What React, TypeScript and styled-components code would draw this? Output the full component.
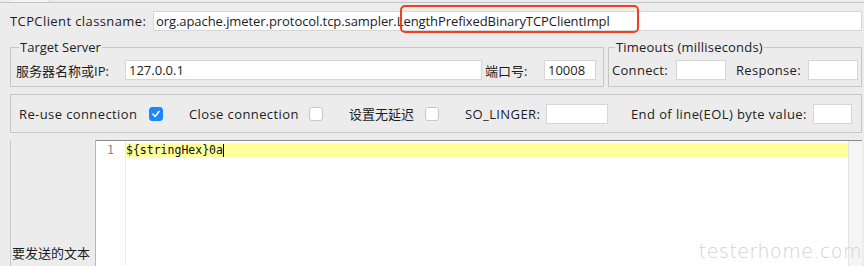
import React from "react";
import styled, { createGlobalStyle } from "styled-components";

const Global = createGlobalStyle`
  html, body { margin: 0; padding: 0; background: #ececec; overflow: hidden; }
  body { width: 864px; height: 266px; font-family: "Open Sans", "Noto Sans CJK SC", sans-serif; font-size: 13px; color: #1d1d1d; }
  * { box-sizing: border-box; }
`;

const Page = styled.div`
  width: 864px;
  height: 266px;
  display: flex;
  flex-direction: column;
  position: relative;
`;

const TopStrip = styled.div`
  height: 3px;
  border-bottom: 1px solid #c4c4c4;
  display: flex;
  padding-left: 10px;
`;

const TopTab = styled.div`
  width: 40px;
  height: 2px;
  background: #f4f4f4;
  border-right: 1px solid #cfcfcf;
`;

const ClassRow = styled.div`
  margin-top: 8px;
  height: 20px;
  display: flex;
  align-items: center;
  padding: 0 2px 0 10px;
`;

const Label = styled.span<{ $w?: number; $ml?: number; $ls?: number }>`
  white-space: nowrap;
  letter-spacing: ${(p) => p.$ls ?? 0}px;
  ${(p) => (p.$w ? `width: ${p.$w}px; flex: none;` : "")}
  ${(p) => (p.$ml ? `margin-left: ${p.$ml}px;` : "")}
`;

const Input = styled.div<{ $w?: number; $ml?: number }>`
  height: 20px;
  background: #fff;
  border: 1px solid #d6d6d6;
  display: flex;
  align-items: center;
  padding-left: 3px;
  white-space: nowrap;
  ${(p) => (p.$w ? `width: ${p.$w}px; flex: none;` : "flex: 1;")}
  ${(p) => (p.$ml ? `margin-left: ${p.$ml}px;` : "")}
`;

const ClassInput = styled(Input)`
  position: relative;
  padding-left: 2px;
  letter-spacing: -0.07px;
`;

const Highlight = styled.span`
  position: absolute;
  left: 246px;
  top: -7px;
  width: 239px;
  height: 28px;
  border: 2px solid #f0401e;
  border-radius: 5px;
  pointer-events: none;
`;

const GroupsRow = styled.div`
  margin-top: 8px;
  display: flex;
  gap: 4px;
  padding: 0 2px 0 10px;
`;

const Group = styled.fieldset<{ $w?: number; $pl?: number }>`
  margin: 0;
  min-width: 0;
  border: 1px solid #c6c6c6;
  padding: 0 4px 5px ${(p) => p.$pl ?? 5}px;
  height: 48px;
  ${(p) => (p.$w ? `width: ${p.$w}px; flex: none;` : "flex: 1;")}
`;

const Legend = styled.legend<{ $ls?: number }>`
  padding: 0 1px;
  margin-left: 3px;
  line-height: 16px;
  letter-spacing: ${(p) => p.$ls ?? 0}px;
`;

const GroupRow = styled.div`
  display: flex;
  align-items: center;
  height: 20px;
  margin-top: 5px;
`;

const OptionsBox = styled.div`
  margin: 7px 2px 0 10px;
  height: 39px;
  border: 1px solid #c6c6c6;
  display: flex;
  align-items: center;
  padding-left: 8px;
`;

const Check = styled.span<{ $on?: boolean }>`
  width: 14px;
  height: 14px;
  flex: none;
  border-radius: 3px;
  background: ${(p) => (p.$on ? "#1b87fa" : "#fff")};
  border: 1px solid ${(p) => (p.$on ? "#1b87fa" : "#c9c9c9")};
  display: flex;
  align-items: center;
  justify-content: center;
`;

const EditorArea = styled.div`
  margin: 7px 2px 0 10px;
  flex: 1;
  display: flex;
  border-left: 1px solid #c9c9c9;
`;

const EditorLabel = styled.div`
  width: 84px;
  display: flex;
  align-items: flex-end;
  padding: 0 0 4px 1px;
`;

const Editor = styled.div`
  flex: 1;
  display: flex;
  background: #fff;
  border-top: 1px solid #8a8a8a;
  border-left: 1px solid #b8b8b8;
`;

const Gutter = styled.div`
  width: 30px;
  border-right: 1px solid #ececec;
  text-align: right;
  padding: 2px 11px 0 0;
  font-family: "DejaVu Sans Mono", monospace;
  font-size: 11.5px;
  line-height: 14px;
  color: #888;
`;

const Code = styled.div`
  flex: 1;
  padding-top: 2px;
`;

const CodeLine = styled.div`
  height: 14px;
  background: #ffff9c;
  font-family: "DejaVu Sans Mono", monospace;
  font-size: 11.5px;
  line-height: 14px;
  color: #111;
  display: flex;
`;

const Caret = styled.span`
  width: 1px;
  height: 13px;
  background: #000;
  margin-top: 1px;
`;

const Scrollbar = styled.div`
  width: 14px;
  background: #f5f5f5;
  border-left: 1px solid #e4e4e4;
`;

const Watermark = styled.div`
  position: absolute;
  right: 2px;
  bottom: 4px;
  font-family: "DejaVu Sans", sans-serif;
  font-weight: 200;
  font-size: 19px;
  letter-spacing: 0.5px;
  color: #d2d2d2;
`;

const CheckMark = () => (
  <svg width="10" height="10" viewBox="0 0 10 10">
    <path d="M2 5.2 L4.1 7.5 L8 2.5" stroke="#fff" strokeWidth="1.6" fill="none" strokeLinecap="round" strokeLinejoin="round" />
  </svg>
);

export default function App() {
  return (
    <Page>
      <Global />
      <TopStrip>
        <TopTab />
      </TopStrip>
      <ClassRow>
        <Label $w={143} $ls={0.4}>TCPClient classname:</Label>
        <ClassInput>
          org.apache.jmeter.protocol.tcp.sampler.LengthPrefixedBinaryTCPClientImpl
          <Highlight />
        </ClassInput>
      </ClassRow>
      <GroupsRow>
        <Group $w={594}>
          <Legend>Target Server</Legend>
          <GroupRow>
            <Label $w={109}>服务器名称或IP:</Label>
            <Input $w={357}>127.0.0.1</Input>
            <Label $w={59} $ml={3}>端口号:</Label>
            <Input $w={52}>10008</Input>
          </GroupRow>
        </Group>
        <Group $pl={3}>
          <Legend $ls={0.2}>Timeouts (milliseconds)</Legend>
          <GroupRow>
            <Label $w={64} $ls={0.3}>Connect:</Label>
            <Input $w={50} />
            <Label $w={72} $ml={10} $ls={0.3}>Response:</Label>
            <Input $w={50} />
          </GroupRow>
        </Group>
      </GroupsRow>
      <OptionsBox>
        <Label $w={130} $ls={0.4}>Re-use connection</Label>
        <Check $on>
          <CheckMark />
        </Check>
        <Label $w={120} $ml={26} $ls={0.4}>Close connection</Label>
        <Check />
        <Label $w={76} $ml={26}>设置无延迟</Label>
        <Check />
        <Label $w={81} $ml={26} $ls={0.4}>SO_LINGER:</Label>
        <Input $w={62} />
        <Label $w={182} $ml={23} $ls={0.4}>End of line(EOL) byte value:</Label>
        <Input $w={39} />
      </OptionsBox>
      <EditorArea>
        <EditorLabel>要发送的文本</EditorLabel>
        <Editor>
          <Gutter>1</Gutter>
          <Code>
            <CodeLine>
              {"${stringHex}0a"}
              <Caret />
            </CodeLine>
          </Code>
          <Scrollbar />
        </Editor>
      </EditorArea>
      <Watermark>testerhome.com</Watermark>
    </Page>
  );
}
